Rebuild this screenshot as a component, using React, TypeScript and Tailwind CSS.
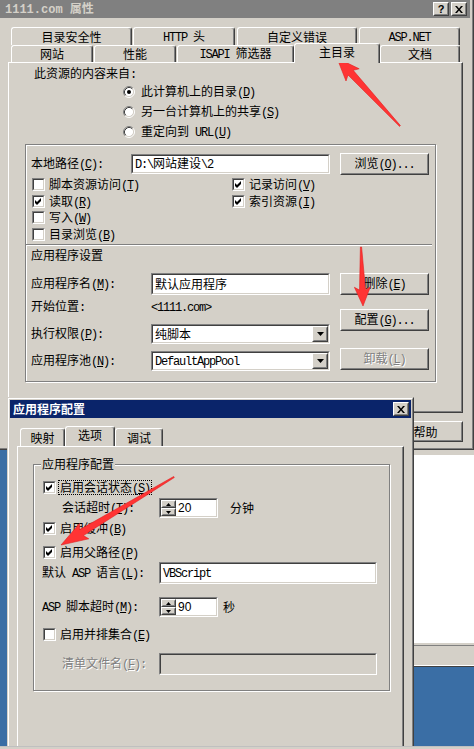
import React from "react";

// ── Win classic bits ──────────────────────────────────────────────────────────

const MONO = "font-['Liberation_Mono',monospace] text-[12px] tracking-[-1.2px]";

const raised = "border border-t-white border-l-white border-b-[#404040] border-r-[#404040]";
const raisedIn = "border border-t-[#d4d0c8] border-l-[#d4d0c8] border-b-[#808080] border-r-[#808080]";
const sunk = "border border-t-[#808080] border-l-[#808080] border-b-white border-r-white";
const sunkIn = "border border-t-[#404040] border-l-[#404040] border-b-[#d4d0c8] border-r-[#d4d0c8]";
const etched = "border border-[#808080] shadow-[inset_1px_1px_0_#fff,1px_1px_0_#fff]";

// ascii runs get the mono face, "&X" underlines X
function T({ s, mono = MONO }: { s: string; mono?: string }) {
  const runs = s.match(/[\x00-\x7f]+|[^\x00-\x7f]+/g) ?? [];
  return (
    <span className="whitespace-pre">
      {runs.map((r, i) =>
        r.charCodeAt(0) > 127 ? (
          <span key={i}>{r}</span>
        ) : (
          <span key={i} className={mono}>
            {r.split(/&(.)/).map((b, j) => (j % 2 ? <u key={j} className="underline-offset-[1px]">{b}</u> : b))}
          </span>
        ),
      )}
    </span>
  );
}

function Btn({ className = "", children, disabled }: { className?: string; children?: React.ReactNode; disabled?: boolean }) {
  return (
    <div className={`bg-[#d4d0c8] ${raised} ${className}`}>
      <div className={`flex size-full items-center justify-center ${raisedIn} ${disabled ? "text-[#808080] [text-shadow:1px_1px_0_#fff]" : ""}`}>
        {children}
      </div>
    </div>
  );
}

function Field({ className = "", inner = "pl-[2px]", disabled, children }: { className?: string; inner?: string; disabled?: boolean; children?: React.ReactNode }) {
  return (
    <div className={`shrink-0 ${sunk} ${className}`}>
      <div className={`flex size-full items-center ${sunkIn} ${disabled ? "bg-[#d4d0c8]" : "bg-white"} ${inner}`}>{children}</div>
    </div>
  );
}

function Check({ on }: { on?: boolean }) {
  return (
    <div className={`size-[13px] shrink-0 ${sunk}`}>
      <div className={`flex size-full items-center justify-center bg-white ${sunkIn}`}>
        {on && (
          <svg width="7" height="7" viewBox="0 0 7 7">
            <path d="M0 2L2 4L6 0V3L2 7L0 5Z" fill="#000" />
          </svg>
        )}
      </div>
    </div>
  );
}

function CheckRow({ on, label, focus }: { on?: boolean; label: string; focus?: boolean }) {
  return (
    <div className="flex h-[13px] items-center">
      <Check on={on} />
      {focus ? (
        <span className="ml-[2px] flex h-[15px] items-center border border-dotted border-black px-[1px]">
          <T s={label} />
        </span>
      ) : (
        <span className="ml-[4px]">
          <T s={label} />
        </span>
      )}
    </div>
  );
}

function Radio({ on, label }: { on?: boolean; label: string }) {
  return (
    <div className="flex h-[14px] items-center">
      <svg width="12" height="12" viewBox="0 0 12 12" className="shrink-0">
        <circle cx="6" cy="6" r="4.5" fill="#fff" />
        <path d="M2.11 9.89A5.5 5.5 0 0 1 9.89 2.11" stroke="#808080" fill="none" />
        <path d="M9.89 2.11A5.5 5.5 0 0 1 2.11 9.89" stroke="#fff" fill="none" />
        <path d="M2.82 9.18A4.5 4.5 0 0 1 9.18 2.82" stroke="#404040" fill="none" />
        <path d="M9.18 2.82A4.5 4.5 0 0 1 2.82 9.18" stroke="#d4d0c8" fill="none" />
        {on && <circle cx="6" cy="6" r="2" fill="#000" />}
      </svg>
      <span className="ml-[6px]">
        <T s={label} />
      </span>
    </div>
  );
}

function Select({ value, className }: { value: string; className: string }) {
  return (
    <Field className={className} inner="pl-[2px]">
      <span className="flex-1">
        <T s={value} />
      </span>
      <Btn className="h-full w-[16px]">
        <svg width="7" height="4" viewBox="0 0 7 4">
          <path d="M0 0H7L3.5 4Z" fill="#000" />
        </svg>
      </Btn>
    </Field>
  );
}

function Spin({ value, className }: { value: string; className: string }) {
  return (
    <Field className={className} inner="">
      <div className="flex h-full w-[15px] flex-col">
        <Btn className="flex-1">
          <svg width="5" height="3" viewBox="0 0 5 3">
            <path d="M0 3H5L2.5 0Z" fill="#000" />
          </svg>
        </Btn>
        <Btn className="flex-1">
          <svg width="5" height="3" viewBox="0 0 5 3">
            <path d="M0 0H5L2.5 3Z" fill="#000" />
          </svg>
        </Btn>
      </div>
      <span className="ml-[2px] font-['Liberation_Sans',sans-serif] text-[12px]">{value}</span>
    </Field>
  );
}

function Tab({ w, label, sel }: { w: string; label: string; sel?: boolean }) {
  return (
    <div
      className={`relative flex shrink-0 items-center justify-center rounded-t-[3px] border-l border-r border-t border-l-white border-r-[#404040] border-t-white bg-[#d4d0c8] shadow-[inset_-1px_0_0_#808080] ${w} ${
        sel ? "z-10 -mt-[2px] h-[20px] pb-[3px]" : "h-full"
      }`}
    >
      <T s={label} />
    </div>
  );
}

function CapBtn({ children }: { children: React.ReactNode }) {
  return <Btn className="h-[14px] w-[16px] shrink-0">{children}</Btn>;
}

const XGlyph = (
  <svg width="8" height="7" viewBox="0 0 8 7">
    <path d="M0 0h2l2 2.5L6 0h2L5 3.5 8 7H6L4 4.5 2 7H0l3-3.5z" fill="#000" />
  </svg>
);

// ── Red arrows ────────────────────────────────────────────────────────────────

function arrowPts(tx: number, ty: number, sx: number, sy: number, head: number, hw: number, nw: number) {
  const L = Math.hypot(sx - tx, sy - ty);
  const ux = (sx - tx) / L;
  const uy = (sy - ty) / L;
  const px = -uy;
  const py = ux;
  const hx = tx + ux * head;
  const hy = ty + uy * head;
  const bx = tx + ux * (head + 3);
  const by = ty + uy * (head + 3);
  return [
    [tx, ty],
    [bx + px * hw, by + py * hw],
    [hx + px * nw, hy + py * nw],
    [sx + px * 0.6, sy + py * 0.6],
    [sx - px * 0.6, sy - py * 0.6],
    [hx - px * nw, hy - py * nw],
    [bx - px * hw, by - py * hw],
  ]
    .map((p) => p.map((n) => n.toFixed(1)).join(","))
    .join(" ");
}

const ARROWS = [
  arrowPts(337, 58, 400, 126, 20, 9, 3.5),
  arrowPts(363, 306, 361, 247, 16, 8, 3),
  arrowPts(61, 545, 174, 477, 24, 9, 3.5),
];

// ── Windows ───────────────────────────────────────────────────────────────────

function PropertiesWindow() {
  return (
    <div className="absolute left-[-4px] top-[-4px] h-[454px] w-[478px] border border-b-[#404040] border-l-[#d4d0c8] border-r-[#404040] border-t-[#d4d0c8] bg-[#d4d0c8]">
      <div className="flex size-full flex-col border border-b-[#808080] border-l-white border-r-[#808080] border-t-white p-[2px]">
        <div className="flex h-[18px] shrink-0 items-center bg-[#808080] pl-[5px] pr-[3px] font-bold text-[#d4d0c8]">
          <T s="1111.com 属性" mono="font-['Liberation_Mono',monospace] text-[12px] font-bold" />
          <div className="flex-1" />
          <CapBtn>
            <span className="font-['Liberation_Sans',sans-serif] text-[11px] font-bold leading-none text-black">?</span>
          </CapBtn>
          <div className="ml-[2px]">
            <CapBtn>{XGlyph}</CapBtn>
          </div>
        </div>

        <div className="relative z-10 ml-[11px] mt-[9px]">
          <div className="flex h-[18px]">
            <Tab w="w-[121px]" label="目录安全性" />
            <div className="ml-[1px]">
              <Tab w="w-[102px]" label="HTTP 头" />
            </div>
            <div className="ml-[2px]">
              <Tab w="w-[120px]" label="自定义错误" />
            </div>
            <div className="ml-[2px]">
              <Tab w="w-[101px]" label="ASP.NET" />
            </div>
          </div>
          <div className="flex h-[17px]">
            <Tab w="w-[82px]" label="网站" />
            <div className="ml-[1px] h-full">
              <Tab w="w-[82px]" label="性能" />
            </div>
            <div className="ml-[1px] h-full">
              <Tab w="w-[117px]" label="ISAPI 筛选器" />
            </div>
            <Tab w="w-[86px]" label="主目录" sel />
            <Tab w="w-[80px]" label="文档" />
          </div>
        </div>

        <div className="ml-[8px] h-[351px] w-[455px] shrink-0 border border-b-[#404040] border-l-white border-r-[#404040] border-t-white shadow-[inset_-1px_-1px_0_#808080]">
          <div className="mt-[3px] h-[14px] pl-[25px]">
            <T s="此资源的内容来自:" />
          </div>
          <div className="ml-[114px] mt-[5px] flex flex-col gap-[6px]">
            <Radio on label="此计算机上的目录(&D)" />
            <Radio label="另一台计算机上的共享(&S)" />
            <Radio label="重定向到 URL(&U)" />
          </div>

          <div className={`ml-[16px] mt-[5px] h-[238px] w-[411px] ${etched}`}>
            <div className="mt-[8px] flex h-[22px] items-center pl-[5px]">
              <span className="w-[100px]">
                <T s="本地路径(&C):" />
              </span>
              <Field className="h-[20px] w-[199px]">
                <T s="D:\网站建设\2" />
              </Field>
              <Btn className="ml-[10px] h-[22px] w-[89px]">
                <T s="浏览(&O)..." />
              </Btn>
            </div>

            <div className="mt-[3px] flex flex-col pl-[6px]">
              <div className="flex">
                <div className="w-[200px]">
                  <CheckRow label="脚本资源访问(&T)" />
                </div>
                <CheckRow on label="记录访问(&V)" />
              </div>
              <div className="mt-[4px] flex">
                <div className="w-[200px]">
                  <CheckRow on label="读取(&R)" />
                </div>
                <CheckRow on label="索引资源(&I)" />
              </div>
              <div className="mt-[3px]">
                <CheckRow label="写入(&W)" />
              </div>
              <div className="mt-[4px]">
                <CheckRow label="目录浏览(&B)" />
              </div>
            </div>

            <div className="mt-[3px] h-[2px] w-[406px] border-b border-t border-b-white border-t-[#808080]" />
            <div className="mt-[2px] h-[14px] pl-[5px]">
              <T s="应用程序设置" />
            </div>

            <div className="mt-[11px] flex pl-[5px]">
              <div className="flex w-[299px] flex-col">
                <div className="flex h-[22px] items-center">
                  <span className="w-[120px]">
                    <T s="应用程序名(&M):" />
                  </span>
                  <Field className="h-[22px] w-[179px]">默认应用程序</Field>
                </div>
                <div className="mt-[5px] flex h-[14px] items-center">
                  <span className="w-[120px]">
                    <T s="开始位置:" />
                  </span>
                  <T s="<1111.com>" />
                </div>
                <div className="mt-[10px] flex h-[20px] items-center">
                  <span className="w-[120px]">
                    <T s="执行权限(&P):" />
                  </span>
                  <Select className="h-[20px] w-[179px]" value="纯脚本" />
                </div>
                <div className="mt-[7px] flex h-[20px] items-center">
                  <span className="w-[120px]">
                    <T s="应用程序池(&N):" />
                  </span>
                  <Select className="h-[20px] w-[179px]" value="DefaultAppPool" />
                </div>
              </div>
              <div className="ml-[10px] flex flex-col">
                <Btn className="h-[22px] w-[89px]">
                  <T s="删除(&E)" />
                </Btn>
                <Btn className="mt-[14px] h-[22px] w-[89px]">
                  <T s="配置(&G)..." />
                </Btn>
                <Btn disabled className="mt-[17px] h-[22px] w-[89px]">
                  <T s="卸载(&L)" />
                </Btn>
              </div>
            </div>
          </div>
        </div>

        <div className="mt-[8px] flex justify-end gap-[6px] pr-[7px]">
          <Btn className="h-[21px] w-[75px]">确定</Btn>
          <Btn className="h-[21px] w-[75px]">取消</Btn>
          <Btn className="h-[21px] w-[75px]">
            <T s="应用(&A)" />
          </Btn>
          <Btn className="h-[21px] w-[75px]">帮助</Btn>
        </div>
      </div>
    </div>
  );
}

function AppConfigWindow() {
  return (
    <div className="absolute left-[7px] top-[397px] h-[370px] w-[407px] border border-b-[#404040] border-l-[#d4d0c8] border-r-[#404040] border-t-[#d4d0c8] bg-[#d4d0c8]">
      <div className="flex size-full flex-col border border-b-[#808080] border-l-white border-r-[#808080] border-t-white p-[1px]">
        <div className="flex h-[18px] shrink-0 items-center bg-[#0a246a] pl-[3px] pr-[2px] font-bold text-white">
          <span>应用程序配置</span>
          <div className="flex-1" />
          <CapBtn>{XGlyph}</CapBtn>
        </div>

        <div className="relative z-10 ml-[10px] mt-[10px] flex h-[18px]">
          <Tab w="w-[45px]" label="映射" />
          <Tab w="w-[50px]" label="选项" sel />
          <Tab w="w-[48px]" label="调试" />
        </div>

        <div className="ml-[7px] h-[320px] w-[387px] shrink-0 border border-b-[#404040] border-l-white border-r-[#404040] border-t-white shadow-[inset_-1px_-1px_0_#808080]">
          <div className={`relative ml-[15px] mt-[17px] h-[227px] w-[357px] ${etched}`}>
            <span className="absolute left-[7px] top-[-8px] bg-[#d4d0c8] px-[1px]">应用程序配置</span>

            <div className="mt-[16px] pl-[9px]">
              <CheckRow on focus label="启用会话状态(&S)" />
            </div>
            <div className="mt-[4px] flex h-[20px] items-center pl-[28px]">
              <span className="w-[97px]">
                <T s="会话超时(&T):" />
              </span>
              <Spin className="h-[20px] w-[59px]" value="20" />
              <span className="ml-[12px]">分钟</span>
            </div>
            <div className="mt-[4px] pl-[9px]">
              <CheckRow on label="启用缓冲(&B)" />
            </div>
            <div className="mt-[11px] pl-[9px]">
              <CheckRow on label="启用父路径(&P)" />
            </div>
            <div className="mt-[3px] flex h-[22px] items-center pl-[8px]">
              <span className="w-[117px]">
                <T s="默认 ASP 语言(&L):" />
              </span>
              <Field className="h-[22px] w-[218px]">
                <T s="VBScript" />
              </Field>
            </div>
            <div className="mt-[13px] flex h-[20px] items-center pl-[8px]">
              <span className="w-[117px]">
                <T s="ASP 脚本超时(&M):" />
              </span>
              <Spin className="h-[20px] w-[59px]" value="90" />
              <span className="ml-[5px]">秒</span>
            </div>
            <div className="mt-[11px] pl-[9px]">
              <CheckRow label="启用并排集合(&E)" />
            </div>
            <div className="mt-[12px] flex h-[22px] items-center pl-[28px]">
              <span className="w-[97px] text-[#808080] [text-shadow:1px_1px_0_#fff]">
                <T s="清单文件名(&F):" />
              </span>
              <Field disabled className="h-[22px] w-[218px]" />
            </div>
          </div>
        </div>
      </div>
    </div>
  );
}

export default function App() {
  return (
    <div className="relative h-[749px] w-[474px] overflow-hidden bg-[#3a6ea5] font-['Noto_Sans_CJK_SC',sans-serif] text-[12px] leading-[14px] text-black">
      {/* window behind both dialogs */}
      <div className="absolute left-[380px] top-[450px] flex w-[94px] flex-col">
        <div className="h-[5px] bg-[#d4d0c8]" />
        <div className="h-[188px] bg-white" />
        <div className="h-[3px] border-b border-b-[#808080] bg-[#d4d0c8]" />
        <div className="h-[21px] border-b border-b-[#404040] bg-[#d4d0c8] shadow-[inset_0_-1px_0_#fff]" />
      </div>

      <PropertiesWindow />
      <AppConfigWindow />

      <div className="absolute bottom-0 left-0 h-[3px] w-full border-t border-t-[#c0c0c0] bg-[#d4d0c8]" />

      <svg className="pointer-events-none absolute left-0 top-0" width="474" height="749" viewBox="0 0 474 749">
        {ARROWS.map((pts, i) => (
          <polygon key={i} points={pts} fill="#ff3434" stroke="#e02020" strokeWidth="0.6" strokeLinejoin="round" />
        ))}
      </svg>
    </div>
  );
}
